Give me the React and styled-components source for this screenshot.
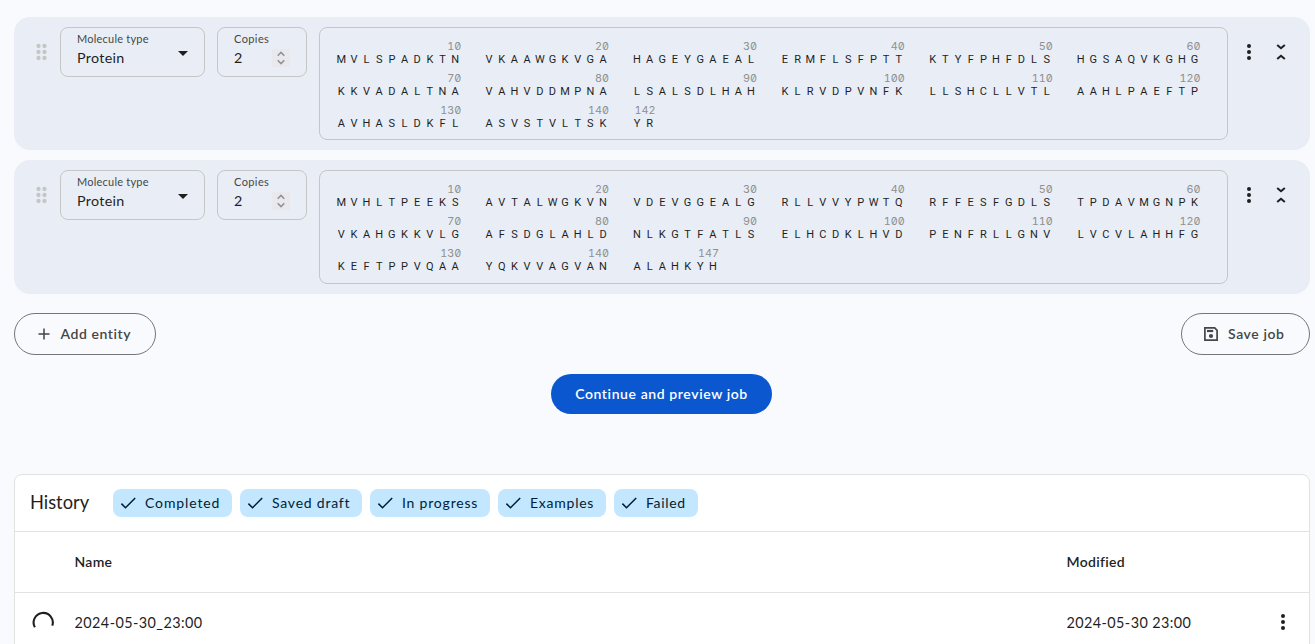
import React from "react";
import styled, { createGlobalStyle } from "styled-components";

const GlobalStyle = createGlobalStyle`
  *, *::before, *::after { box-sizing: border-box; }
  html, body { margin: 0; height: 644px; overflow: hidden; background: #f8fafe; }
  body { font-family: Lato, "Open Sans", sans-serif; color: #1f1f1f; font-size: 14px; }
  svg { display: block; flex: none; }
  button { font: inherit; }
`;

const Page = styled.main`
  height: 644px;
  overflow: hidden;
  padding: 17px 5px 0 14px;
`;

const Label = styled.span`
  letter-spacing: ${(p) => p.$track || 0}px;
  white-space: nowrap;
`;

const EntityList = styled.section`
  display: flex;
  flex-direction: column;
  gap: 10px;
`;

const EntityCard = styled.article`
  display: flex;
  align-items: flex-start;
  height: 133.4px;
  padding: 10px 16px 10px 22px;
  background: #e9eef6;
  border-radius: 16px;
`;

const DragHandle = styled.div`
  width: 24px;
  height: 50px;
  display: flex;
  align-items: center;
`;

const Field = styled.div`
  flex: none;
  width: ${(p) => p.$width}px;
  height: 50px;
  margin-right: 12px;
  padding: 4px 16px 0 16px;
  border: 1px solid #c4c7c5;
  border-radius: 8px;
`;

const FieldName = styled.div`
  height: 14px;
  line-height: 14px;
  font-size: 11px;
  color: #444746;
`;

const FieldValue = styled.div`
  display: flex;
  align-items: center;
  justify-content: space-between;
  height: 24px;
  line-height: 24px;
  font-size: 14.3px;
`;

const CaretSlot = styled.span`
  padding-bottom: 10px;
`;

const Stepper = styled.span`
  display: flex;
  align-items: center;
  justify-content: center;
  width: 18px;
  height: 18px;
  background: #e9e8ed;
`;

const SequenceBox = styled.div`
  flex: none;
  width: 909px;
  height: 113.4px;
  padding: 12.1px 0 0 16.5px;
  border: 1px solid #c4c7c5;
  border-radius: 8px;
`;

const SequenceRow = styled.div`
  display: flex;
  gap: 21.2px;
  height: 31.8px;
`;

const Block = styled.div`
  width: ${(p) => p.$count * 12.67}px;
`;

const Position = styled.div`
  height: 12px;
  margin-right: 2px;
  line-height: 13px;
  display: flex;
  justify-content: flex-end;
  font-family: Inter, sans-serif;
  font-feature-settings: "zero", "tnum";
  font-size: 10.8px;
  color: #8e9192;
`;

const Residues = styled.div`
  display: flex;
  height: 15px;
  line-height: 15px;
  font-family: Roboto, sans-serif;
  font-size: 11px;
`;

const Residue = styled.span`
  width: 12.67px;
  padding-right: 3.2px;
  text-align: center;
`;

const CardActions = styled.div`
  display: flex;
  align-items: center;
  height: 50px;
  margin-left: 9.4px;
  gap: 8px;
`;

const Actions = styled.div`
  display: flex;
  justify-content: space-between;
  margin-top: 19.2px;
`;

const OutlineButton = styled.button`
  display: flex;
  align-items: center;
  gap: ${(p) => p.$gap}px;
  width: ${(p) => p.$width}px;
  height: 42px;
  padding: 0 0 0 ${(p) => p.$inset}px;
  border: 1px solid #747775;
  border-radius: 21px;
  background: transparent;
  color: #444746;
  font-weight: 600;
`;

const PrimaryButton = styled.button`
  display: block;
  width: 221px;
  height: 40px;
  margin: 19px auto 60px 537px;
  padding: 0;
  border: 0;
  border-radius: 20px;
  background: #0b57d0;
  color: #fff;
  font-weight: 600;
`;

const HistoryPanel = styled.section`
  height: 190px;
  border: 1px solid #e1e3e1;
  border-radius: 8px 8px 0 0;
  background: #fff;
`;

const HistoryHeader = styled.header`
  display: flex;
  align-items: center;
  height: 57px;
  padding-left: 15px;
  border-bottom: 1px solid #e1e3e1;
`;

const HistoryTitle = styled.h2`
  width: 83px;
  margin: 0 0 2px;
  font-size: 18.3px;
  font-weight: 400;
  line-height: 28px;
`;

const Chips = styled.div`
  display: flex;
  gap: 8px;
`;

const Chip = styled.div`
  display: flex;
  align-items: center;
  gap: 8px;
  width: ${(p) => p.$width}px;
  height: 28px;
  padding-left: 7px;
  border-radius: 8px;
  background: #c2e7ff;
  color: #001d35;
`;

const TableRow = styled.div`
  display: grid;
  grid-template-columns: 59.5px 992px 204px 24px;
  align-items: center;
  height: ${(p) => p.$height}px;
  font-size: ${(p) => (p.$heading ? 14 : 14.4)}px;
  font-weight: ${(p) => (p.$heading ? 600 : 400)};
  border-bottom: 1px solid #e1e3e1;
`;

const StatusCell = styled.div`
  padding: 2px 0 0 16px;
`;

const DragIcon = () => (
  <svg width="12" height="18" viewBox="0 0 12 18" fill="#c4c7c5">
    {[3, 9, 15].map((y) => [2.5, 8.5].map((x) => <circle key={x + "-" + y} cx={x} cy={y} r="2.15" />))}
  </svg>
);
const Caret = () => (
  <svg width="10" height="5" viewBox="0 0 10 5"><path d="M0 0h10L5 5z" fill="#1f1f1f" /></svg>
);
const StepIcon = () => (
  <svg width="8" height="14" viewBox="0 0 8 14" fill="none" stroke="#8f9196" strokeWidth="1.5">
    <path d="m.7 4.7 3.3-3.3 3.3 3.3M.7 9.3 4 12.6l3.3-3.3" />
  </svg>
);
const MoreIcon = () => (
  <svg width="24" height="24" viewBox="0 0 24 24" fill="#1f1f1f">
    <circle cx="12" cy="6" r="2" /><circle cx="12" cy="12" r="2" /><circle cx="12" cy="18" r="2" />
  </svg>
);
const CollapseIcon = () => (
  <svg width="24" height="24" viewBox="0 0 24 24" fill="none" stroke="#1f1f1f" strokeWidth="2">
    <path d="m8.2 4.9 3.8 3.3 3.8-3.3M8.2 19.1l3.8-3.3 3.8 3.3" />
  </svg>
);
const PlusIcon = () => (
  <svg width="12" height="12" viewBox="0 0 12 12" stroke="#444746" strokeWidth="1.5"><path d="M6 .5v11M.5 6h11" /></svg>
);
const SaveIcon = () => (
  <svg width="14" height="14" viewBox="0 0 14 14" fill="none" stroke="#444746" strokeWidth="1.7">
    <path d="M.9.9h9.8l2.4 2.4v9.8H.9z" /><path d="M3 4h6.2" strokeWidth="2.2" />
    <circle cx="7" cy="9" r="2.1" fill="#444746" stroke="none" />
  </svg>
);
const CheckIcon = () => (
  <svg width="17" height="14" viewBox="0 0 17 14" fill="none" stroke="#001d35" strokeWidth="1.5"><path d="m1.4 7.6 4.1 4.1L15.2 2" /></svg>
);
const Spinner = () => (
  <svg width="24" height="24" viewBox="0 0 24 24" fill="none" stroke="#1f1f1f" strokeWidth="2.1">
    <path d="M3.9 16.3A9.6 9.6 0 1 1 21.3 14.6" />
  </svg>
);

const entities = [
  ["MVLSPADKTN VKAAWGKVGA HAGEYGAEAL ERMFLSFPTT KTYFPHFDLS HGSAQVKGHG",
   "KKVADALTNA VAHVDDMPNA LSALSDLHAH KLRVDPVNFK LLSHCLLVTL AAHLPAEFTP",
   "AVHASLDKFL ASVSTVLTSK YR"],
  ["MVHLTPEEKS AVTALWGKVN VDEVGGEALG RLLVVYPWTQ RFFESFGDLS TPDAVMGNPK",
   "VKAHGKKVLG AFSDGLAHLD NLKGTFATLS ELHCDKLHVD PENFRLLGNV LVCVLAHHFG",
   "KEFTPPVQAA YQKVVAGVAN ALAHKYH"],
];

const chips = [
  ["Completed", 119, 0.87],
  ["Saved draft", 122, 0.78],
  ["In progress", 120, 0.8],
  ["Examples", 108, 0.75],
  ["Failed", 84, 0.65],
];

function Sequence({ rows }) {
  return (
    <SequenceBox>
      {rows.map((row, r) => (
        <SequenceRow key={row}>
          {row.split(" ").map((block, b) => (
            <Block key={b} $count={block.length}>
              <Position>{r * 60 + b * 10 + block.length}</Position>
              <Residues>{[...block].map((c, i) => <Residue key={i}>{c}</Residue>)}</Residues>
            </Block>
          ))}
        </SequenceRow>
      ))}
    </SequenceBox>
  );
}

function Entity({ rows }) {
  return (
    <EntityCard>
      <DragHandle><DragIcon /></DragHandle>
      <Field $width={145}>
        <FieldName><Label $track={0.22}>Molecule type</Label></FieldName>
        <FieldValue><Label $track={0.3}>Protein</Label><CaretSlot><Caret /></CaretSlot></FieldValue>
      </Field>
      <Field $width={90}>
        <FieldName><Label $track={0.4}>Copies</Label></FieldName>
        <FieldValue>2<Stepper><StepIcon /></Stepper></FieldValue>
      </Field>
      <Sequence rows={rows} />
      <CardActions><MoreIcon /><CollapseIcon /></CardActions>
    </EntityCard>
  );
}

export default function App() {
  return (
    <Page>
      <GlobalStyle />
      <EntityList>{entities.map((rows, i) => <Entity key={i} rows={rows} />)}</EntityList>
      <Actions>
        <OutlineButton $width={142} $inset={22.5} $gap={11}><PlusIcon /><Label $track={0.57}>Add entity</Label></OutlineButton>
        <OutlineButton $width={129} $inset={22} $gap={10}><SaveIcon /><Label $track={0.6}>Save job</Label></OutlineButton>
      </Actions>
      <PrimaryButton><Label $track={0.6}>Continue and preview job</Label></PrimaryButton>
      <HistoryPanel>
        <HistoryHeader>
          <HistoryTitle><Label>History</Label></HistoryTitle>
          <Chips>
            {chips.map(([name, width, track]) => (
              <Chip key={name} $width={width}><CheckIcon /><Label $track={track}>{name}</Label></Chip>
            ))}
          </Chips>
        </HistoryHeader>
        <TableRow $heading $height={61}>
          <span /><Label $track={0.3}>Name</Label><Label $track={0.3}>Modified</Label>
        </TableRow>
        <TableRow $height={60}>
          <StatusCell><Spinner /></StatusCell>
          <Label $track={0.44}>2024-05-30_23:00</Label><Label $track={0.42}>2024-05-30 23:00</Label><MoreIcon />
        </TableRow>
      </HistoryPanel>
    </Page>
  );
}
